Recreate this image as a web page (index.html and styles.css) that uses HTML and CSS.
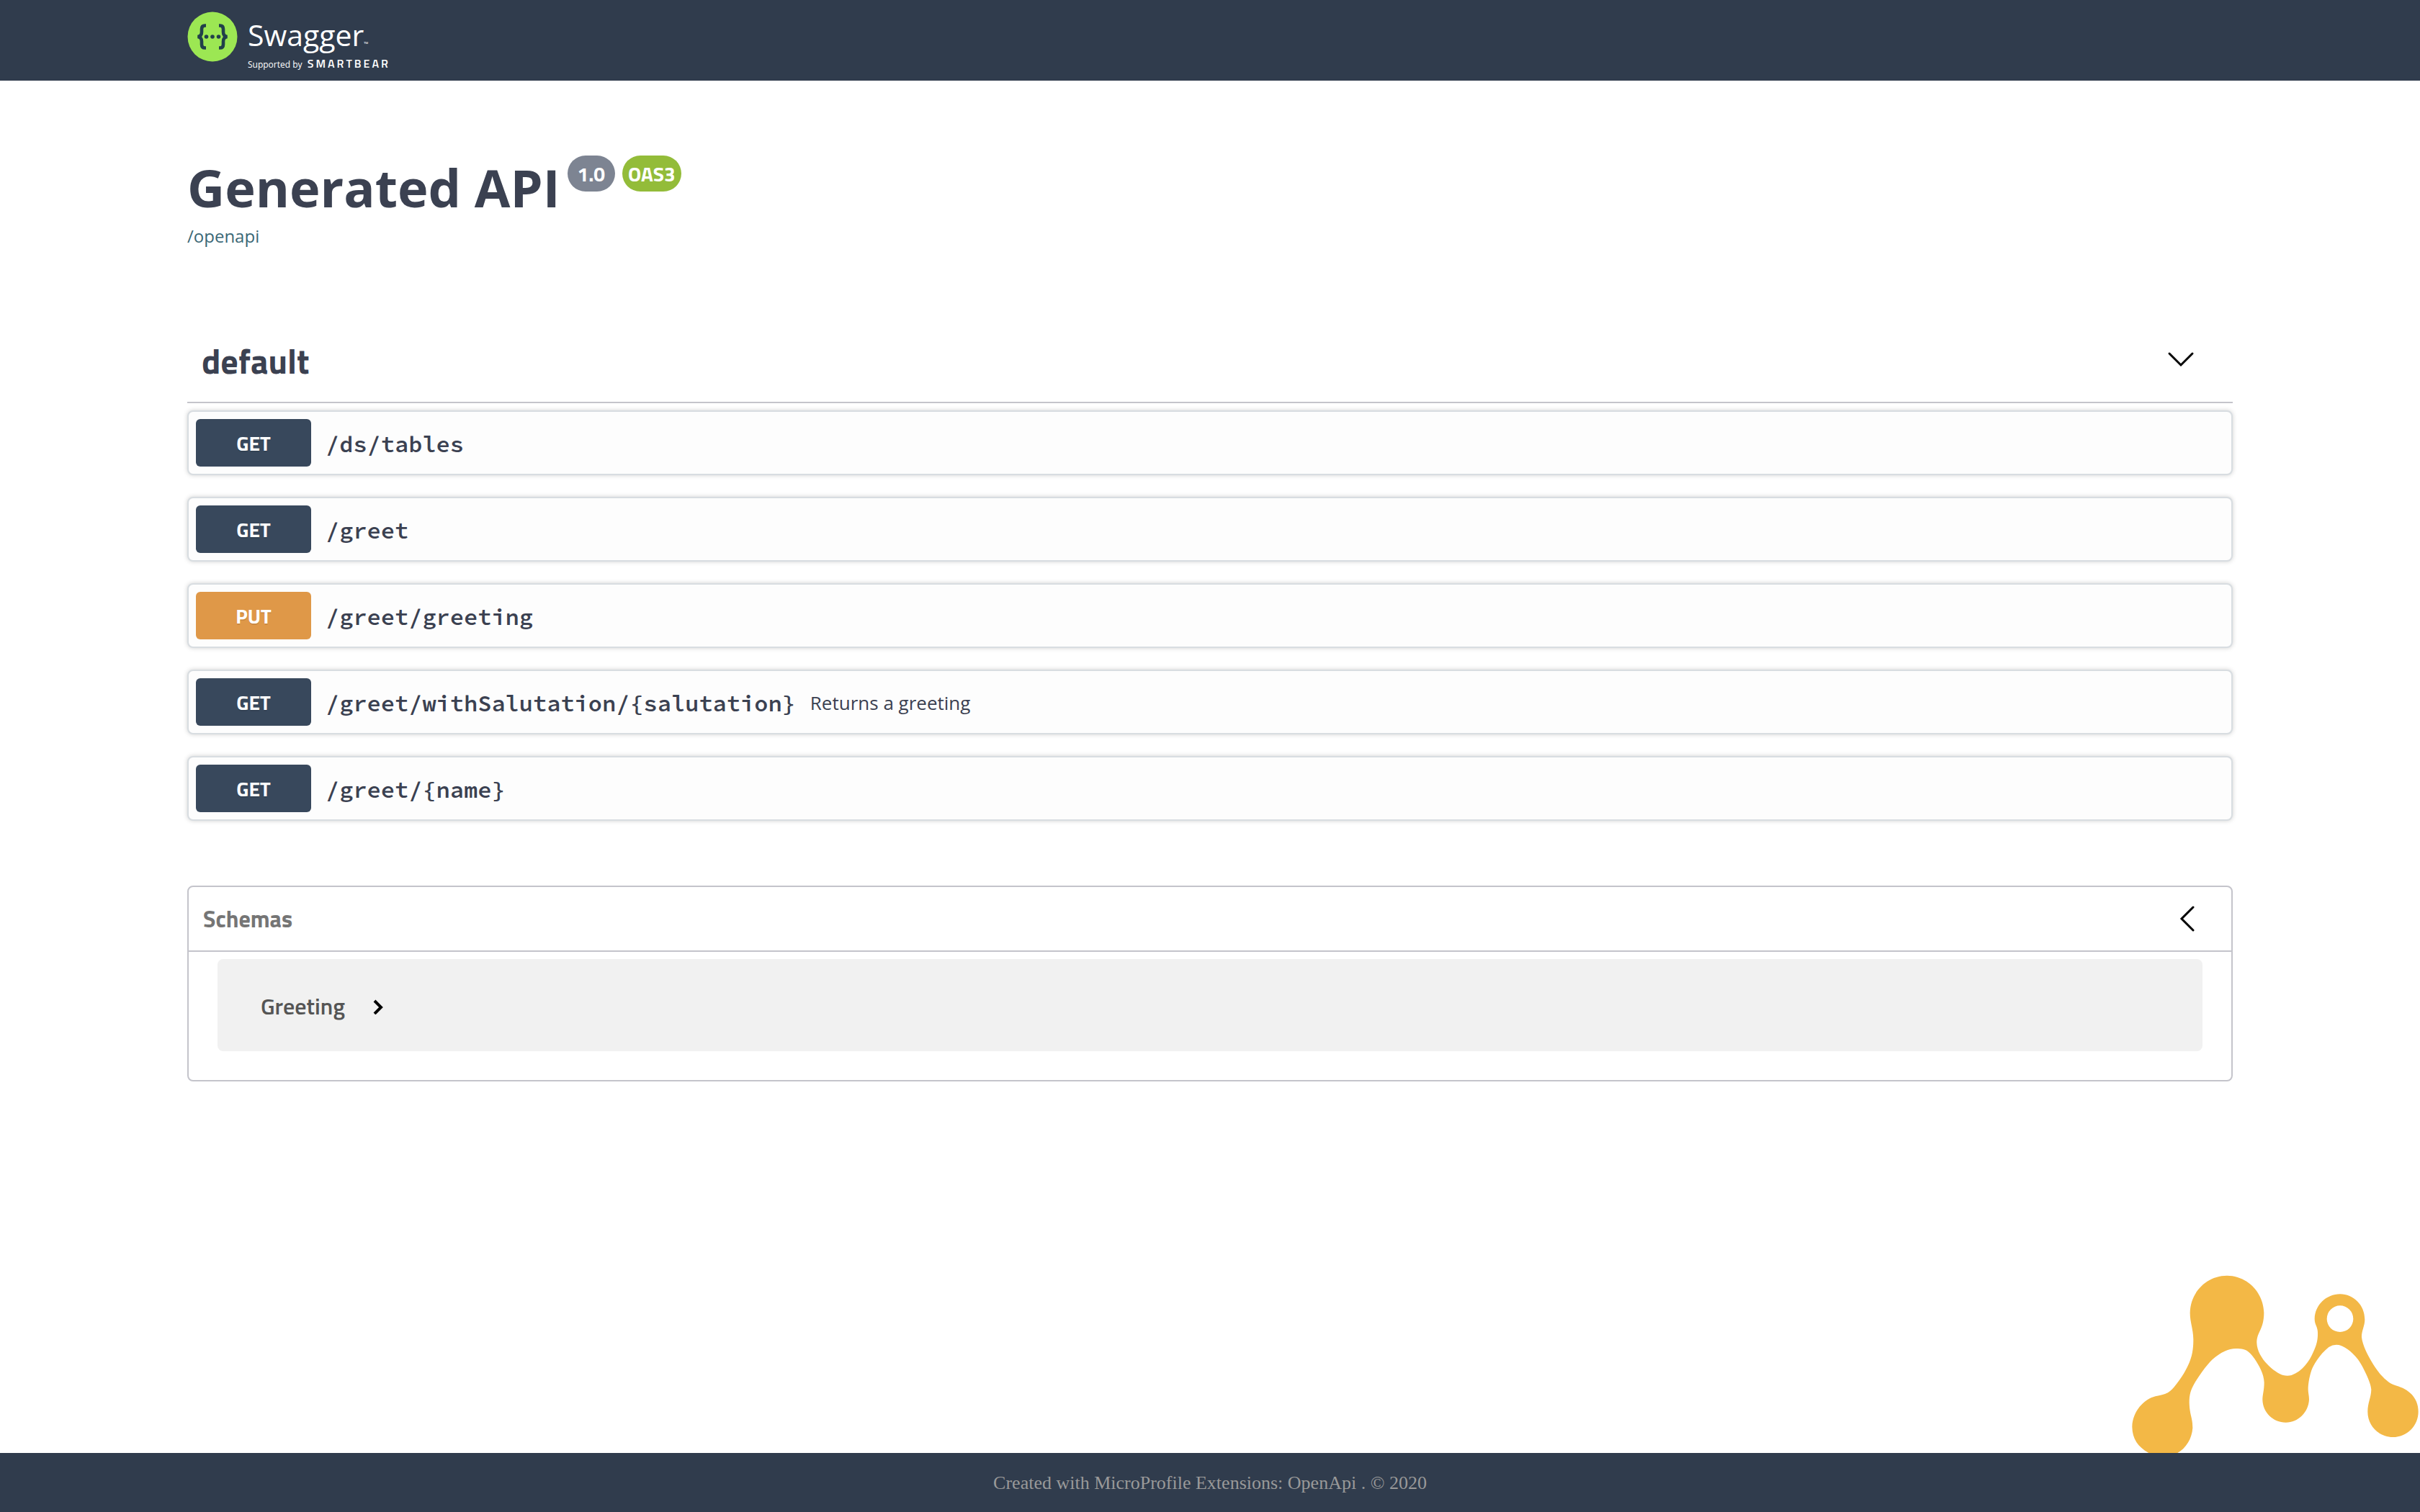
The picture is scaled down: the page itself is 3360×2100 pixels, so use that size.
FILE: index.html
```html
<!DOCTYPE html>
<html lang="en">
<head>
<meta charset="utf-8">
<title>Generated API</title>
<meta name="viewport" content="width=device-width, initial-scale=1">
<link rel="stylesheet" href="styles.css">
</head>
<body>
<header class="topbar">
  <div class="wrapper">
    <a class="brand" href="#" aria-label="Swagger, supported by SmartBear">
      <svg class="brand-mark" viewBox="0 0 70 70" aria-hidden="true">
        <circle cx="35" cy="35" r="34.5" fill="#9ce753"/>
        <g fill="none" stroke="#21404a" stroke-width="4.6">
          <path d="M26 19.500h-1.500c-3.500 0-4.500 1.800-4.500 4.800v4.200c0 4-1.500 6-5.500 6.500c4 .5 5.500 2.500 5.500 6.500v4.200c0 3 1 4.800 4.500 4.800h1.500"/>
          <path d="M44 19.500h1.500c3.500 0 4.500 1.800 4.500 4.800v4.200c0 4 1.500 6 5.500 6.500c-4 .5-5.500 2.500-5.500 6.500v4.200c0 3-1 4.800-4.500 4.800h-1.500"/>
        </g>
        <g fill="#21404a"><circle cx="26.500" cy="35" r="2.800"/><circle cx="35" cy="35" r="2.800"/><circle cx="43.500" cy="35" r="2.800"/></g>
      </svg>
      <span class="brand-text">
        <span class="brand-name">Swagger<span class="brand-tm">™</span></span>
        <span class="brand-by">Supported by <strong>SMARTBEAR</strong></span>
      </span>
    </a>
  </div>
</header>

<main class="wrapper">
  <section class="info">
    <div class="title-row">
      <h1>Generated API</h1>
      <span class="badge">1.0</span>
      <span class="badge badge-oas">OAS3</span>
    </div>
    <a class="spec-link" href="/openapi">/openapi</a>
  </section>

  <section class="tag-section">
    <div class="tag-head">
      <h2>default</h2>
      <button class="toggle" type="button" aria-label="Collapse default">
        <svg viewBox="0 0 40 40" aria-hidden="true"><path d="M4 7L20 23L36 7"/></svg>
      </button>
    </div>
    <div class="operations">
      <button class="operation" type="button"><span class="method">GET</span><span class="path">/ds/tables</span></button>
      <button class="operation" type="button"><span class="method">GET</span><span class="path">/greet</span></button>
      <button class="operation" type="button"><span class="method method-put">PUT</span><span class="path">/greet/greeting</span></button>
      <button class="operation" type="button"><span class="method">GET</span><span class="path">/greet/withSalutation/{salutation}</span><span class="summary">Returns a greeting</span></button>
      <button class="operation" type="button"><span class="method">GET</span><span class="path">/greet/{name}</span></button>
    </div>
  </section>

  <section class="models">
    <div class="models-head">
      <h3>Schemas</h3>
      <button class="toggle" type="button" aria-label="Collapse schemas">
        <svg viewBox="0 0 40 40" aria-hidden="true"><path d="M37 4L21 20L37 36"/></svg>
      </button>
    </div>
    <button class="model" type="button">
      <span>Greeting</span>
      <svg viewBox="0 0 20 24" aria-hidden="true"><path d="M5 5L14 14L5 23"/></svg>
    </button>
  </section>
</main>

<svg class="corner-logo" viewBox="120 90 1200 744" role="img" aria-label="MicroProfile Extensions">
  <path fill="#f3b846" fill-rule="evenodd" d="M121 725C123 660 170 610 218 598C262 588 272 586 295 560C330 518 350 480 360 455C375 420 376 385 376 360C375 315 362 290 362 250C364 160 435 95 516 95C600 95 668 165 670 250C670 320 640 330 640 375C642 440 715 500 750 510Q768 514 785 510C830 495 860 450 875 415C892 380 895 355 894 330C893 305 881 300 881 275C882 218 930 172 987 172C1043 172 1090 218 1090 278C1090 305 1076 325 1077 352C1080 385 1105 430 1115 448C1150 510 1185 540 1210 550C1240 560 1258 565 1280 585C1302 605 1313 632 1313 662C1313 720 1266 768 1207 768C1148 768 1102 720 1102 662C1102 625 1116 605 1117 570C1116 540 1080 470 1062 445C1035 408 1000 388 982 384Q960 380 940 393C900 425 875 470 868 490C858 520 854 550 854 570C855 590 858 595 858 612C855 665 812 707 761 707C708 707 665 665 664 612C664 590 671 575 671 540C670 505 650 470 630 440C605 405 590 402 570 400C530 394 495 410 455 445C425 475 395 520 380 545C365 572 359 590 359 625C361 680 373 685 373 730C370 775 345 815 310 834L190 834C145 808 122 775 121 725ZM932 275a55 55 0 1 0 110 0a55 55 0 1 0-110 0Z"/>
</svg>

<footer class="footer">Created with MicroProfile Extensions: OpenApi . © 2020</footer>
</body>
</html>
```
FILE: styles.css
```css
* { box-sizing: border-box; }

body {
  margin: 0;
  min-height: 100vh;
  display: flex;
  flex-direction: column;
  background: #fff;
  color: #3b4151;
  font-family: "Open Sans", sans-serif;
}

h1, h2, h3 { margin: 0; }

button {
  margin: 0;
  padding: 0;
  border: 0;
  background: none;
  color: inherit;
  font: inherit;
  text-align: left;
  cursor: pointer;
}

.wrapper {
  width: 100%;
  max-width: 2920px;
  margin: 0 auto;
  padding: 0 40px;
}

.topbar {
  height: 112px;
  background: #303c4d;
}

.brand {
  display: inline-flex;
  gap: 14px;
  padding-top: 16px;
  color: #fff;
  text-decoration: none;
}

.brand-mark { width: 70px; height: 70px; }

.brand-text { display: flex; flex-direction: column; }

.brand-name {
  font-size: 41px;
  font-weight: 400;
  line-height: 64px;
}

.brand-tm { font-size: 8px; line-height: 8px; }

.brand-by {
  font-size: 12px;
  line-height: 16px;
  white-space: nowrap;
}

.brand-by strong {
  margin-left: 4px;
  font-family: "Titillium Web", Roboto, sans-serif;
  font-size: 16px;
  font-weight: 600;
  letter-spacing: 3px;
}

.info { padding: 98px 0 106px; }

.title-row {
  display: flex;
  align-items: flex-start;
  gap: 10px;
}

h1 {
  font-size: 72px;
  font-weight: 700;
  line-height: 100px;
}

.badge {
  margin-top: 6px;
  padding: 2px 14px 0;
  border-radius: 25px;
  background: #7d8492;
  color: #fff;
  font-family: "Titillium Web", Roboto, sans-serif;
  font-size: 28px;
  font-weight: 700;
  line-height: 48px;
}

.badge-oas { padding: 2px 8px 0; background: #93bc39; }

.spec-link {
  display: block;
  width: fit-content;
  margin-top: 2px;
  color: #3b6876;
  font-size: 24px;
  line-height: 32px;
  text-decoration: none;
}

.tag-head {
  display: flex;
  align-items: center;
  justify-content: space-between;
  padding: 24px 52px 28px 20px;
  border-bottom: 2px solid #c4c4cb;
}

h2 {
  font-family: "Titillium Web", Roboto, sans-serif;
  font-size: 48px;
  line-height: 56px;
}

.toggle { width: 40px; height: 40px; }

.toggle svg {
  display: block;
  width: 40px;
  height: 40px;
  fill: none;
  stroke: #000;
  stroke-width: 3;
  stroke-linecap: round;
}

.tag-head .toggle { padding-top: 2px; }

.operations {
  display: flex;
  flex-direction: column;
  gap: 30px;
  padding-top: 10px;
}

.operation {
  display: flex;
  align-items: center;
  gap: 20px;
  padding: 10px;
  border: 2px solid #d8dde1;
  border-radius: 8px;
  background: #fdfdfd;
  box-shadow: 0 0 6px rgba(0, 0, 0, 0.19);
}

.method {
  width: 160px;
  padding-top: 2px;
  border-radius: 6px;
  background: #38485c;
  color: #fff;
  font-family: "Titillium Web", Roboto, sans-serif;
  font-size: 28px;
  font-weight: 700;
  line-height: 64px;
  text-align: center;
  text-shadow: 0 2px 0 rgba(0, 0, 0, 0.1);
}

.method-put { background: #df9848; }

.path {
  padding-top: 4px;
  font-family: "Source Code Pro", "Liberation Mono", monospace;
  font-size: 32px;
  font-weight: 600;
  line-height: 40px;
}

.summary { padding-top: 2px; font-size: 26px; line-height: 36px; }

.models {
  margin-top: 90px;
  padding-bottom: 40px;
  border: 2px solid #c4c4cb;
  border-radius: 8px;
}

.models-head {
  display: flex;
  align-items: center;
  justify-content: space-between;
  height: 90px;
  padding: 0 50px 0 20px;
  border-bottom: 2px solid #c4c4cb;
}

h3 {
  color: #757575;
  font-family: "Titillium Web", Roboto, sans-serif;
  font-size: 32px;
  line-height: 40px;
}

.model {
  display: flex;
  align-items: center;
  gap: 36px;
  width: calc(100% - 80px);
  height: 128px;
  margin: 10px 40px 0;
  padding: 2px 60px 0;
  border-radius: 8px;
  background: #f1f1f1;
  color: #555;
  font-family: "Titillium Web", Roboto, sans-serif;
  font-size: 32px;
  font-weight: 600;
  line-height: 40px;
}

.model svg {
  width: 20px;
  height: 24px;
  fill: none;
  stroke: #000;
  stroke-width: 4;
}

.corner-logo {
  display: block;
  width: 400px;
  height: 248px;
  margin-top: auto;
  align-self: flex-end;
}

.footer {
  padding: 25px 24px 23px;
  background: #303c4d;
  color: #999;
  font-family: "Liberation Serif", serif;
  font-size: 26px;
  line-height: 34px;
  text-align: center;
}
```
